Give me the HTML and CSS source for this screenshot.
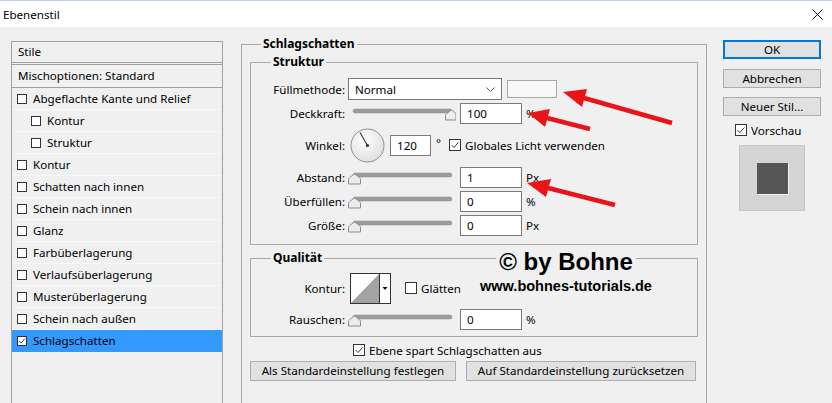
FILE: index.html
```html
<!DOCTYPE html>
<html lang="de">
<head>
  <meta charset="UTF-8">
  <title>Ebenenstil</title>
  <link rel="stylesheet" href="styles.css">
</head>
<body>
  <div class="titlebar">
    <span>Ebenenstil</span>
    <svg class="close" width="11" height="11" viewBox="0 0 11 11"><path d="M0.5 0.5L10.5 10.5M10.5 0.5L0.5 10.5" stroke="#111" stroke-width="1"/></svg>
  </div>

  <div class="dialog">
    <div class="styles">
      <div class="styles-head">Stile</div>
      <div class="styles-blend">Mischoptionen: Standard</div>
      <ul class="styles-list">
        <li><span class="cb"></span>Abgeflachte Kante und Relief</li>
        <li class="sub"><span class="cb"></span>Kontur</li>
        <li class="sub"><span class="cb"></span>Struktur</li>
        <li><span class="cb"></span>Kontur</li>
        <li><span class="cb"></span>Schatten nach innen</li>
        <li><span class="cb"></span>Schein nach innen</li>
        <li><span class="cb"></span>Glanz</li>
        <li><span class="cb"></span>Farbüberlagerung</li>
        <li><span class="cb"></span>Verlaufsüberlagerung</li>
        <li><span class="cb"></span>Musterüberlagerung</li>
        <li><span class="cb"></span>Schein nach außen</li>
        <li class="active"><span class="cb"><svg viewBox="0 0 10 10"><path d="M1.5 5L4 7.5L8.5 2" fill="none" stroke="#222" stroke-width="1.1"/></svg></span>Schlagschatten</li>
      </ul>
    </div>

    <div class="settings">
      <fieldset class="group outer">
        <legend>Schlagschatten</legend>

        <fieldset class="group structure">
          <legend>Struktur</legend>
          <div class="row">
            <span class="lbl">Füllmethode:</span>
            <div class="select">Normal<svg width="9" height="5" viewBox="0 0 9 5"><path d="M0.5 0.5L4.5 4.5L8.5 0.5" fill="none" stroke="#555"/></svg></div>
            <div class="swatch"></div>
          </div>
          <div class="row">
            <span class="lbl">Deckkraft:</span>
            <svg class="slider" width="108" height="16" viewBox="0 0 108 16">
              <rect x="5" y="4" width="99" height="4" rx="2" fill="#9d9d9d" stroke="#8a8a8a" stroke-width="0.5"/>
              <path d="M97.5 15V10.5Q97.5 9.5 98.5 8.7L102.5 5.6Q103.5 5 104.5 5.6L108 8.5V15Z" fill="#ececec" stroke="#8a8a8a"/>
            </svg>
            <div class="field">100</div>
            <span class="unit">%</span>
          </div>
          <div class="row angle">
            <span class="lbl">Winkel:</span>
            <svg class="dial" width="35" height="35" viewBox="0 0 35 35">
              <defs>
                <radialGradient id="dialfill" cx="0.4" cy="0.35" r="0.7">
                  <stop offset="0" stop-color="#ffffff"/>
                  <stop offset="1" stop-color="#dedede"/>
                </radialGradient>
              </defs>
              <circle cx="17.5" cy="17.5" r="16.5" fill="url(#dialfill)" stroke="#8f8f8f"/>
              <line x1="17.5" y1="17.5" x2="10" y2="4.5" stroke="#333" stroke-width="1.1"/>
              <circle cx="17.5" cy="17.5" r="1.6" fill="#333"/>
            </svg>
            <div class="field short">120</div>
            <span class="deg">°</span>
            <label class="check"><span class="cb big"><svg viewBox="0 0 12 12"><path d="M2 6.2L4.8 9L10 3" fill="none" stroke="#222" stroke-width="1.1"/></svg></span>Globales Licht verwenden</label>
          </div>
          <div class="row">
            <span class="lbl">Abstand:</span>
            <svg class="slider" width="108" height="16" viewBox="0 0 108 16">
              <rect x="5" y="4" width="99" height="4" rx="2" fill="#9d9d9d" stroke="#8a8a8a" stroke-width="0.5"/>
              <path d="M0.5 15V10.5Q0.5 9.5 1.5 8.7L5.5 5.6Q6.5 5 7.5 5.6L11.5 8.7Q12.5 9.5 12.5 10.5V15Z" fill="#ececec" stroke="#8a8a8a"/>
            </svg>
            <div class="field">1</div>
            <span class="unit">Px</span>
          </div>
          <div class="row">
            <span class="lbl">Überfüllen:</span>
            <svg class="slider" width="108" height="16" viewBox="0 0 108 16">
              <rect x="5" y="4" width="99" height="4" rx="2" fill="#9d9d9d" stroke="#8a8a8a" stroke-width="0.5"/>
              <path d="M0.5 15V10.5Q0.5 9.5 1.5 8.7L5.5 5.6Q6.5 5 7.5 5.6L11.5 8.7Q12.5 9.5 12.5 10.5V15Z" fill="#ececec" stroke="#8a8a8a"/>
            </svg>
            <div class="field">0</div>
            <span class="unit">%</span>
          </div>
          <div class="row">
            <span class="lbl">Größe:</span>
            <svg class="slider" width="108" height="16" viewBox="0 0 108 16">
              <rect x="5" y="4" width="99" height="4" rx="2" fill="#9d9d9d" stroke="#8a8a8a" stroke-width="0.5"/>
              <path d="M0.5 15V10.5Q0.5 9.5 1.5 8.7L5.5 5.6Q6.5 5 7.5 5.6L11.5 8.7Q12.5 9.5 12.5 10.5V15Z" fill="#ececec" stroke="#8a8a8a"/>
            </svg>
            <div class="field">0</div>
            <span class="unit">Px</span>
          </div>
        </fieldset>

        <fieldset class="group quality">
          <legend>Qualität</legend>
          <div class="row contour">
            <span class="lbl">Kontur:</span>
            <svg class="curve" width="41" height="31" viewBox="0 0 41 31">
              <rect x="0.5" y="0.5" width="40" height="30" fill="#fff" stroke="#333"/>
              <polygon points="1,30 29,1 29,30" fill="#a3a3a3"/>
              <line x1="29.5" y1="0.5" x2="29.5" y2="30.5" stroke="#333"/>
              <polygon points="32.5,14 37.5,14 35,17" fill="#111"/>
            </svg>
            <label class="check"><span class="cb big"></span>Glätten</label>
          </div>
          <div class="row noise">
            <span class="lbl">Rauschen:</span>
            <svg class="slider" width="108" height="16" viewBox="0 0 108 16">
              <rect x="5" y="4" width="99" height="4" rx="2" fill="#9d9d9d" stroke="#8a8a8a" stroke-width="0.5"/>
              <path d="M0.5 15V10.5Q0.5 9.5 1.5 8.7L5.5 5.6Q6.5 5 7.5 5.6L11.5 8.7Q12.5 9.5 12.5 10.5V15Z" fill="#ececec" stroke="#8a8a8a"/>
            </svg>
            <div class="field">0</div>
            <span class="unit">%</span>
          </div>
        </fieldset>

        <div class="knockout">
          <label class="check"><span class="cb big"><svg viewBox="0 0 12 12"><path d="M2 6.2L4.8 9L10 3" fill="none" stroke="#222" stroke-width="1.1"/></svg></span>Ebene spart Schlagschatten aus</label>
        </div>
        <div class="defaults">
          <button class="btn wide">Als Standardeinstellung festlegen</button>
          <button class="btn wider">Auf Standardeinstellung zurücksetzen</button>
        </div>
      </fieldset>
    </div>

    <div class="actions">
      <button class="btn ok">OK</button>
      <button class="btn">Abbrechen</button>
      <button class="btn">Neuer Stil...</button>
      <label class="check preview-check"><span class="cb big"><svg viewBox="0 0 12 12"><path d="M2 6.2L4.8 9L10 3" fill="none" stroke="#222" stroke-width="1.1"/></svg></span>Vorschau</label>
      <div class="preview"><div class="preview-square"></div></div>
    </div>
  </div>

  <div class="watermark">
    <div class="wm-big"><span>© by Bohne</span></div>
    <div class="wm-url">www.bohnes-tutorials.de</div>
  </div>

  <svg class="arrows" width="832" height="403" viewBox="0 0 832 403">
    <g fill="#e8141a" stroke="#e8141a">
      <line x1="672" y1="123" x2="584" y2="98" stroke-width="4.5"/>
      <polygon points="563,92 587,89 582,107" stroke="none"/>
      <line x1="590" y1="129" x2="547" y2="118" stroke-width="4.5"/>
      <polygon points="528,113 550,109 545,127" stroke="none"/>
      <line x1="615" y1="205" x2="548" y2="188" stroke-width="4.5"/>
      <polygon points="527,183 551,179 546,197" stroke="none"/>
    </g>
  </svg>
</body>
</html>
```

FILE: styles.css
```css
body {
  margin: 0;
  width: 832px;
  height: 403px;
  overflow: hidden;
  position: relative;
  background-color: #f0f0f0;
  font-family: "Noto Sans", sans-serif;
  font-size: 11.6px;
  color: #000;
}
.titlebar {
  height: 26px;
  border-top: 1px solid #b9d1ea;
  background-color: #fff;
  display: flex;
  align-items: center;
  justify-content: space-between;
  padding: 0 9px 0 3px;
}
.dialog {
  display: flex;
  align-items: flex-start;
}

/* style list */
.styles {
  margin: 14px 0 0 11px;
  width: 212px;
  height: 380px;
  box-sizing: border-box;
  border: 1px solid #a0a0a0;
}
.styles-head {
  height: 20px;
  line-height: 20px;
  padding-left: 6px;
  border-bottom: 3px double #a0a0a0;
}
.styles-blend {
  height: 22px;
  line-height: 22px;
  padding-left: 6px;
  border-bottom: 1px solid #a0a0a0;
}
.styles-list {
  list-style: none;
  margin: 0;
  padding: 0;
}
.styles-list li {
  height: 22px;
  box-sizing: border-box;
  display: flex;
  align-items: center;
  padding-left: 5px;
  border-bottom: 1px solid #f8f8f8;
}
.styles-list li.sub {
  padding-left: 19px;
}
.styles-list li.active {
  background-color: #3399ff;
  border-bottom-color: #3399ff;
}
.cb {
  display: inline-block;
  width: 10px;
  height: 10px;
  box-sizing: border-box;
  border: 1px solid #333;
  background-color: #fff;
  margin-right: 6px;
  flex: none;
}
.cb svg {
  display: block;
  width: 100%;
  height: 100%;
}
.cb.big {
  width: 12px;
  height: 12px;
  margin-right: 4px;
}

/* settings */
.settings {
  margin: 9px 0 0 18px;
}
.group {
  margin: 0;
  border: 1px solid #a9a9a9;
  padding: 0;
  min-width: 0;
}
.group legend {
  font-weight: bold;
  font-size: 12px;
  line-height: 16px;
  padding: 0 2px;
  margin-left: 20px;
}
.outer {
  width: 466px;
  box-sizing: border-box;
  padding: 2px 8px 40px;
}
.outer > legend {
  margin-left: 11px;
}
.structure {
  padding: 7px 0;
}
.quality {
  margin-top: 5px;
  padding: 6px 0 2px;
}
.row {
  display: flex;
  align-items: center;
  height: 24px;
}
.row.angle {
  height: 40px;
}
.row.contour {
  height: 32px;
}
.row.noise {
  height: 30px;
}
.lbl {
  width: 94px;
  margin-right: 3px;
  text-align: right;
  white-space: nowrap;
}
.select {
  width: 154px;
  height: 22px;
  box-sizing: border-box;
  border: 1px solid #7a7a7a;
  background-color: #fff;
  display: flex;
  align-items: center;
  justify-content: space-between;
  padding: 0 6px 0 6px;
}
.swatch {
  width: 50px;
  height: 18px;
  box-sizing: border-box;
  margin-left: 5px;
  border: 1px solid #a8a8a8;
  background-color: #f8f8f8;
}
.slider {
  margin-right: 4px;
  flex: none;
}
.field {
  width: 62px;
  height: 21px;
  box-sizing: border-box;
  border: 1px solid #7a7a7a;
  background-color: #fff;
  padding-left: 6px;
  line-height: 19px;
}
.field.short {
  width: 41px;
}
.unit {
  margin-left: 4px;
}
.dial {
  margin: 0 5px 0 2px;
}
.deg {
  margin: -6px 8px 0 5px;
}
.check {
  display: flex;
  align-items: center;
  white-space: nowrap;
}
.curve {
  margin-left: 2px;
  margin-right: 14px;
}
.knockout {
  margin-top: 4px;
  height: 18px;
  display: flex;
  align-items: center;
  padding-left: 103px;
}
.defaults {
  margin-top: 2px;
  display: flex;
  gap: 10px;
}
.btn {
  height: 19px;
  box-sizing: border-box;
  border: 1px solid #adadad;
  background-color: #e1e1e1;
  font-family: "Noto Sans", sans-serif;
  font-size: 11.6px;
  color: #000;
  padding: 0;
  line-height: 16px;
  white-space: nowrap;
}
.defaults .btn {
  height: 20px;
}
.btn.wide {
  width: 206px;
}
.btn.wider {
  width: 230px;
}

/* right column */
.actions {
  margin: 13px 0 0 16px;
  width: 98px;
  display: flex;
  flex-direction: column;
}
.actions .btn {
  margin-bottom: 9px;
}
.actions .btn.ok {
  border: 2px solid #0078d7;
  line-height: 14px;
  margin-bottom: 10px;
}
.preview-check {
  margin: -4px 0 0 12px;
  height: 18px;
}
.preview {
  margin: 6px 0 0 16px;
  width: 66px;
  height: 66px;
  box-sizing: border-box;
  border: 1px solid #c6c6c6;
  background-color: #d4d4d4;
  display: flex;
  align-items: center;
  justify-content: center;
}
.preview-square {
  width: 31px;
  height: 31px;
  background-color: #565656;
  box-shadow: 1px 1px 0 #f4f4f4;
}

/* overlays */
.watermark {
  position: absolute;
  left: 478px;
  top: 250px;
  width: 176px;
  text-align: center;
  font-family: "Liberation Sans", Arial, sans-serif;
  font-weight: bold;
  color: #000;
}
.wm-big {
  font-size: 24px;
  line-height: 24px;
}
.wm-big span {
  background-color: #f0f0f0;
  padding: 0 3px;
}
.wm-url {
  font-size: 14.5px;
  line-height: 24px;
}
.arrows {
  position: absolute;
  left: 0;
  top: 0;
  pointer-events: none;
}
```
